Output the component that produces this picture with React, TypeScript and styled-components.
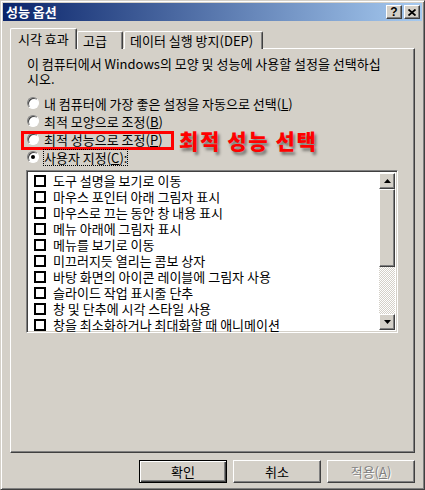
import React from "react";
import styled, { createGlobalStyle } from "styled-components";

const GlobalStyle = createGlobalStyle`
	html, body {
		margin: 0;
		padding: 0;
		background: #d4d0c8;
	}
	body {
		font-family: "Noto Sans CJK KR", "Liberation Sans", sans-serif;
		font-size: 13px;
		color: #000;
	}
	* {
		box-sizing: border-box;
	}
`;

const raised = `
	border: 1px solid;
	border-color: #fff #404040 #404040 #fff;
	box-shadow: inset -1px -1px #808080, inset 1px 1px #d4d0c8;
`;

const sunken = `
	border: 1px solid;
	border-color: #808080 #fff #fff #808080;
	box-shadow: inset 1px 1px #404040, inset -1px -1px #d4d0c8;
`;

const Window = styled.div`
	width: 425px;
	height: 490px;
	padding: 2px;
	display: flex;
	flex-direction: column;
	background: #d4d0c8;
	border: 1px solid;
	border-color: #d4d0c8 #404040 #404040 #d4d0c8;
	box-shadow: inset 1px 1px #fff, inset -1px -1px #808080;
`;

const TitleBar = styled.div`
	height: 18px;
	display: flex;
	align-items: center;
	padding: 0 2px 0 3px;
	background: linear-gradient(to right, #0a246a, #a6caf0);
`;

const Title = styled.div`
	flex: 1;
	color: #fff;
	font-weight: 700;
	font-size: 13px;
	line-height: 18px;
`;

const CaptionButtons = styled.div`
	display: flex;
	gap: 2px;
`;

const CaptionButton = styled.div`
	width: 16px;
	height: 14px;
	background: #d4d0c8;
	display: flex;
	align-items: center;
	justify-content: center;
	font-family: "Liberation Sans", sans-serif;
	font-weight: 700;
	font-size: 12px;
	line-height: 12px;
	${raised}
`;

const Body = styled.div`
	flex: 1;
	display: flex;
	flex-direction: column;
	padding: 7px 6px 0 7px;
`;

const TabStrip = styled.div`
	height: 21px;
	display: flex;
	align-items: flex-end;
	position: relative;
	z-index: 1;
	margin-bottom: -1px;
`;

const Tab = styled.div<{ $active?: boolean; $width: number }>`
	width: ${({ $width }) => $width}px;
	height: ${({ $active }) => ($active ? "21px" : "18px")};
	padding: ${({ $active }) => ($active ? "1px 0 0 7px" : "0 0 0 5px")};
	line-height: 17px;
	background: #d4d0c8;
	border-top: 1px solid #fff;
	border-left: 1px solid #fff;
	border-right: 1px solid #404040;
	box-shadow: inset -1px 0 #808080;
	border-radius: 2px 2px 0 0;
	white-space: nowrap;
	margin-right: ${({ $active }) => ($active ? "0" : "1px")};
`;

const Panel = styled.div`
	width: 405px;
	height: 405px;
	display: flex;
	flex-direction: column;
	padding: 7px 14px 0 16px;
	border: 1px solid;
	border-color: #fff #404040 #404040 #fff;
	box-shadow: inset -1px -1px #808080;
`;

const Description = styled.p`
	margin: 0;
	line-height: 15px;
`;

const RadioGroup = styled.div`
	margin-top: 8px;
	display: flex;
	flex-direction: column;
`;

const RadioRow = styled.div`
	height: 18px;
	display: flex;
	align-items: center;
	gap: 5px;
	position: relative;
	white-space: nowrap;
`;

const RadioCircle = styled.span<{ $checked?: boolean }>`
	width: 12px;
	height: 12px;
	flex: none;
	border-radius: 50%;
	background: #fff;
	border: 1px solid;
	border-color: #808080 #fff #fff #808080;
	box-shadow: inset 1px 1px #404040;
	display: flex;
	align-items: center;
	justify-content: center;

	&::after {
		content: "";
		width: 4px;
		height: 4px;
		border-radius: 50%;
		background: ${({ $checked }) => ($checked ? "#000" : "transparent")};
	}
`;

const Focus = styled.span`
	outline: 1px dotted #000;
	line-height: 15px;
`;

const Key = styled.u`
	text-underline-offset: 1px;
`;

const HighlightBox = styled.div`
	position: absolute;
	left: -6px;
	top: 1px;
	width: 153px;
	height: 19px;
	border: 3px solid #ff0000;
`;

const Annotation = styled.div`
	position: absolute;
	left: 152px;
	top: -1px;
	color: #ff0000;
	font-size: 21px;
	font-weight: 900;
	letter-spacing: 1.6px;
	line-height: 22px;
	text-shadow: 2px 3px 3px rgba(0, 0, 0, 0.45);
`;

const ListBox = styled.div`
	margin: 4px 0 0 -1px;
	width: 372px;
	height: 163px;
	display: flex;
	background: #fff;
	padding: 2px;
	${sunken}
`;

const Items = styled.div`
	flex: 1;
	display: flex;
	flex-direction: column;
`;

const Item = styled.div`
	height: 16px;
	flex: none;
	display: flex;
	align-items: center;
	gap: 7px;
	padding-left: 5px;
	white-space: nowrap;
	line-height: 16px;
`;

const CheckBox = styled.span`
	width: 12px;
	height: 12px;
	flex: none;
	border: 2px solid #000;
	background: #fff;
`;

const ScrollBar = styled.div`
	width: 16px;
	display: flex;
	flex-direction: column;
	background-color: #fff;
	background-image: conic-gradient(#d4d0c8 25%, #fff 0 50%, #d4d0c8 0 75%, #fff 0);
	background-size: 2px 2px;
`;

const ScrollButton = styled.div`
	width: 16px;
	height: 16px;
	flex: none;
	background: #d4d0c8;
	display: flex;
	align-items: center;
	justify-content: center;
	${raised}
`;

const Thumb = styled.div`
	height: 78px;
	flex: none;
	background: #d4d0c8;
	${raised}
`;

const Track = styled.div`
	flex: 1;
`;

const ButtonRow = styled.div`
	display: flex;
	justify-content: flex-end;
	gap: 6px;
	margin-top: 7px;
	padding-right: 1px;
`;

const Button = styled.div<{ $default?: boolean; $disabled?: boolean }>`
	width: 88px;
	height: 23px;
	display: flex;
	align-items: center;
	justify-content: center;
	background: #d4d0c8;
	color: ${({ $disabled }) => ($disabled ? "#808080" : "#000")};
	text-shadow: ${({ $disabled }) => ($disabled ? "1px 1px #fff" : "none")};
	border: 1px solid;
	border-color: ${({ $default }) =>
		$default ? "#000" : "#fff #404040 #404040 #fff"};
	box-shadow: ${({ $default }) =>
		$default
			? "inset 1px 1px #fff, inset -1px -1px #404040, inset -2px -2px #808080"
			: "inset -1px -1px #808080"};
`;

const Arrow = ({ up }: { up?: boolean }) => (
	<svg width="7" height="4" viewBox="0 0 7 4">
		<path d={up ? "M3.5 0 L7 4 L0 4 Z" : "M0 0 L7 0 L3.5 4 Z"} fill="#000" />
	</svg>
);

const CloseGlyph = () => (
	<svg width="8" height="7" viewBox="0 0 8 7">
		<path d="M0.5 0.5 L7.5 6.5 M7.5 0.5 L0.5 6.5" stroke="#000" strokeWidth="1.8" />
	</svg>
);

const effects = [
	"도구 설명을 보기로 이동",
	"마우스 포인터 아래 그림자 표시",
	"마우스로 끄는 동안 창 내용 표시",
	"메뉴 아래에 그림자 표시",
	"메뉴를 보기로 이동",
	"미끄러지듯 열리는 콤보 상자",
	"바탕 화면의 아이콘 레이블에 그림자 사용",
	"슬라이드 작업 표시줄 단추",
	"창 및 단추에 시각 스타일 사용",
	"창을 최소화하거나 최대화할 때 애니메이션",
];

const App = () => {
	return (
		<>
			<GlobalStyle />
			<Window>
				<TitleBar>
					<Title>성능 옵션</Title>
					<CaptionButtons>
						<CaptionButton>?</CaptionButton>
						<CaptionButton>
							<CloseGlyph />
						</CaptionButton>
					</CaptionButtons>
				</TitleBar>
				<Body>
					<TabStrip>
						<Tab $active $width={67}>시각 효과</Tab>
						<Tab $width={46}>고급</Tab>
						<Tab $width={139}>데이터 실행 방지(DEP)</Tab>
					</TabStrip>
					<Panel>
						<Description>
							이 컴퓨터에서 Windows의 모양 및 성능에 사용할 설정을 선택하십
							<br />
							시오.
						</Description>
						<RadioGroup>
							<RadioRow>
								<RadioCircle />
								<span>
									내 컴퓨터에 가장 좋은 설정을 자동으로 선택(<Key>L</Key>)
								</span>
							</RadioRow>
							<RadioRow>
								<RadioCircle />
								<span>
									최적 모양으로 조정(<Key>B</Key>)
								</span>
							</RadioRow>
							<RadioRow>
								<RadioCircle />
								<span>
									최적 성능으로 조정(<Key>P</Key>)
								</span>
								<HighlightBox />
								<Annotation>최적 성능 선택</Annotation>
							</RadioRow>
							<RadioRow>
								<RadioCircle $checked />
								<Focus>
									사용자 지정(<Key>C</Key>):
								</Focus>
							</RadioRow>
						</RadioGroup>
						<ListBox>
							<Items>
								{effects.map((label) => (
									<Item key={label}>
										<CheckBox />
										{label}
									</Item>
								))}
							</Items>
							<ScrollBar>
								<ScrollButton>
									<Arrow up />
								</ScrollButton>
								<Thumb />
								<Track />
								<ScrollButton>
									<Arrow />
								</ScrollButton>
							</ScrollBar>
						</ListBox>
					</Panel>
					<ButtonRow>
						<Button $default>확인</Button>
						<Button>취소</Button>
						<Button $disabled>
							적용(<Key>A</Key>)
						</Button>
					</ButtonRow>
				</Body>
			</Window>
		</>
	);
};

export default App;
